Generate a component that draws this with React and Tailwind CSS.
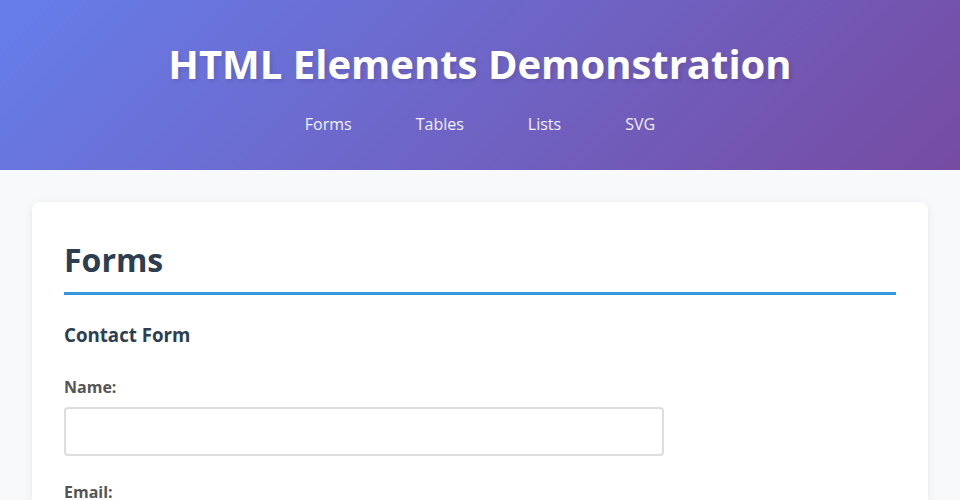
export default function App() {
  const font = { fontFamily: '"Open Sans", "Noto Sans", sans-serif' };
  return (
    <div className="min-h-screen bg-[#f8f9fa]" style={font}>
      <header className="h-[170px] bg-[linear-gradient(135deg,#667eea_0%,#764ba2_100%)] text-white flex flex-col items-center pt-[40px]">
        <h1 className="text-[40px] font-bold leading-[1.2] m-0 [text-shadow:2px_2px_4px_rgba(0,0,0,0.12)]">HTML Elements Demonstration</h1>
        <nav className="mt-[24px] flex gap-16 text-[16px] leading-6 text-white/90">
          <a>Forms</a>
          <a>Tables</a>
          <a>Lists</a>
          <a>SVG</a>
        </nav>
      </header>
      <main className="px-8 pt-8">
        <section className="bg-white rounded-lg shadow-[0_2px_10px_rgba(0,0,0,0.08)] px-8 pt-[39px] pb-8">
          <h2 className="text-[32px] font-bold leading-[1.2] text-[#2c3e50] pb-[13px] border-b-[3px] border-[#3498db]">Forms</h2>
          <h3 className="mt-[27px] text-[18.7px] font-bold leading-[26px] text-[#2c3e50]">Contact Form</h3>
          <div className="mt-[27px]">
            <label className="block text-[16px] font-bold text-[#555] leading-6 mb-[8px]">Name:</label>
            <input className="block w-[600px] h-[49px] border-2 border-[#ddd] rounded-[4px] px-3" />
          </div>
          <div className="mt-[24px]">
            <label className="block text-[16px] font-bold text-[#555] leading-6 mb-[8px]">Email:</label>
            <input className="block w-[600px] h-[49px] border-2 border-[#ddd] rounded-[4px] px-3" />
          </div>
        </section>
      </main>
    </div>
  );
}
